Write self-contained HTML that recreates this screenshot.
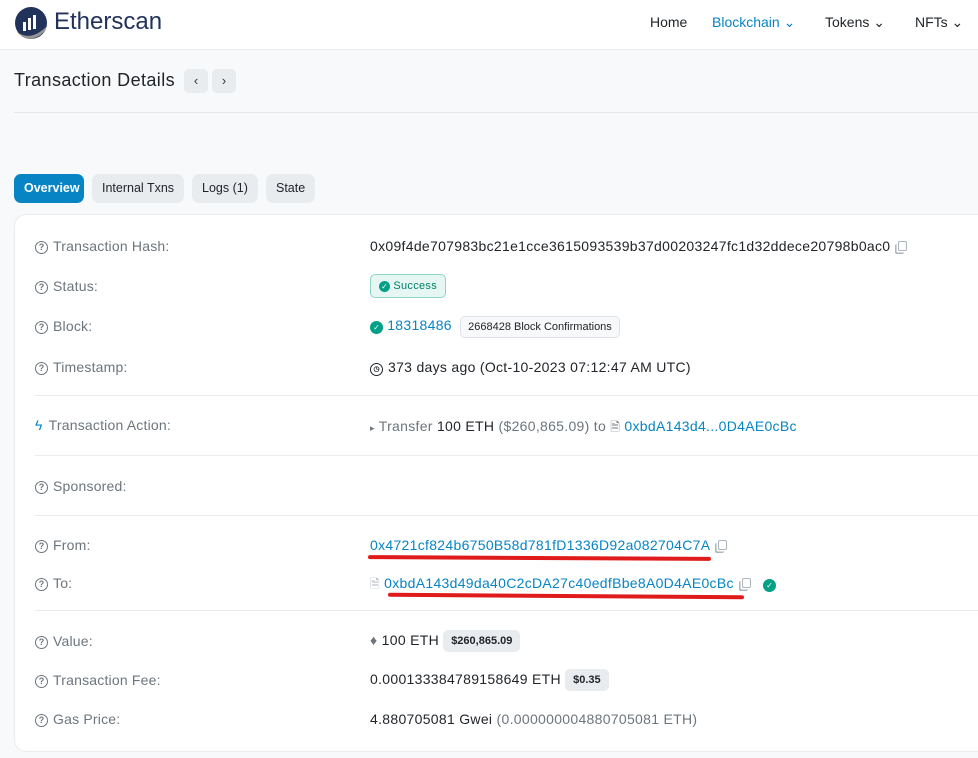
<!DOCTYPE html>
<html><head><meta charset="utf-8"><style>
*{box-sizing:border-box;margin:0;padding:0}
body{width:978px;height:758px;overflow:hidden;background:#f8f9fa;font-family:"Liberation Sans",sans-serif;font-size:14px;color:#212529;position:relative}
.hdr{position:absolute;left:0;top:0;width:978px;height:50px;background:#fff;border-bottom:1px solid #e9ecef}
.a{position:absolute;white-space:nowrap}
.nav{top:14px;font-size:14px;color:#212529}
.btn{position:absolute;top:69px;width:24px;height:24px;background:#e9ecef;border-radius:5px;text-align:center;line-height:24px;font-size:13px;color:#333}
.tab{position:absolute;top:174px;height:29px;line-height:29px;border-radius:7px;background:#e9ecef;font-size:12.5px;padding:0 10px;color:#212529}
.card{position:absolute;left:14px;top:214px;width:980px;height:538px;background:#fff;border:1px solid #e9ecef;border-radius:12px}
.lbl{position:absolute;left:35px;color:#6c757d;font-size:14px;white-space:nowrap;letter-spacing:0.2px}
.q{display:inline-block;width:13px;height:13px;border:1.3px solid #6c757d;border-radius:50%;font-size:9px;line-height:11px;text-align:center;margin-right:5px;vertical-align:1px;font-weight:bold;letter-spacing:0}
.v{position:absolute;left:370px;white-space:nowrap;font-size:14px;letter-spacing:0.3px}
.hr{position:absolute;left:35px;width:943px;height:1px;background:#e9ecef}
.lnk{color:#0784c3}
.badge{display:inline-block;background:#e9ecef;border-radius:5px;font-size:11px;font-weight:bold;padding:4px 6px;vertical-align:1px;letter-spacing:0}
.chk{display:inline-block;width:13px;height:13px;border-radius:50%;background:#00a186;color:#fff;font-size:8px;line-height:13px;text-align:center;vertical-align:0px;letter-spacing:0}
.cp{display:inline-block;width:9px;height:10px;border:1.2px solid #adb5bd;border-radius:2px;margin-left:8px;vertical-align:0px;box-shadow:-2px 2px 0 -0.5px #fff,-3px 3px 0 0 #adb5bd}
.red{position:absolute;height:4px;background:#e01b1b;border-radius:2px}
</style></head><body>
<div class="hdr">
<svg class="a" style="left:14px;top:6px" width="34" height="34" viewBox="0 0 34 34"><circle cx="17" cy="17" r="16" fill="#21325b"/><path d="M3 26 Q17 36 33 20 Q30 30 17 33 Q8 32 3 26Z" fill="#979695"/><rect x="9" y="16" width="3" height="9" fill="#fff"/><rect x="14" y="12" width="3" height="12" fill="#fff"/><rect x="19" y="9" width="3" height="14" fill="#fff"/></svg>
<div class="a" style="left:54px;top:8px;font-size:24px;color:#21325b">Etherscan</div>
<div class="a nav" style="left:650px">Home</div>
<div class="a nav" style="left:712px;color:#0784c3">Blockchain ⌄</div>
<div class="a nav" style="left:825px">Tokens ⌄</div>
<div class="a nav" style="left:915px">NFTs ⌄</div>
</div>
<div class="a" style="left:14px;top:70px;font-size:18px;color:#212529;letter-spacing:0.4px">Transaction Details</div>
<div class="btn" style="left:184px">‹</div>
<div class="btn" style="left:212px">›</div>
<div class="a" style="left:14px;top:112px;width:964px;height:1px;background:#e3e6ea"></div>
<div class="tab" style="left:14px;background:#0784c3;color:#fff;font-weight:bold;width:70px">Overview</div>
<div class="tab" style="left:92px">Internal Txns</div>
<div class="tab" style="left:192px">Logs (1)</div>
<div class="tab" style="left:266px">State</div>
<div class="card"></div>
<div class="lbl" style="top:238px"><span class="q">?</span>Transaction Hash:</div>
<div class="v" style="top:238px">0x09f4de707983bc21e1cce3615093539b37d00203247fc1d32ddece20798b0ac0<span class="cp"></span></div>
<div class="lbl" style="top:278px"><span class="q">?</span>Status:</div>
<div class="v" style="top:274px"><span style="display:inline-block;border:1px solid #8ed5c6;background:#e6f6f3;border-radius:5px;padding:5px 8px;font-size:11px;color:#00806b"><span class="chk" style="width:11px;height:11px;line-height:11px">✓</span> Success</span></div>
<div class="lbl" style="top:318px"><span class="q">?</span>Block:</div>
<div class="v" style="top:316px"><span class="chk">✓</span> <span class="lnk">18318486</span> <span style="display:inline-block;border:1px solid #dee2e6;border-radius:5px;padding:4px 7px;font-size:11px;margin-left:4px;background:#f8f9fa;letter-spacing:0">2668428 Block Confirmations</span></div>
<div class="lbl" style="top:359px"><span class="q">?</span>Timestamp:</div>
<div class="v" style="top:359px"><span class="q" style="border-color:#212529;color:#212529;font-size:7px">◷</span>373 days ago (Oct-10-2023 07:12:47 AM UTC)</div>
<div class="hr" style="top:395px"></div>
<div class="lbl" style="top:417px"><span style="color:#0784c3;margin-right:6px">ϟ</span>Transaction Action:</div>
<div class="v" style="top:418px;color:#6c757d"><span style="font-size:9px">▸</span> Transfer <span style="color:#212529">100 ETH</span> ($260,865.09) to <span style="font-size:12px">🗎</span> <span class="lnk">0xbdA143d4...0D4AE0cBc</span></div>
<div class="hr" style="top:455px"></div>
<div class="lbl" style="top:478px"><span class="q">?</span>Sponsored:</div>
<div class="hr" style="top:515px"></div>
<div class="lbl" style="top:537px"><span class="q">?</span>From:</div>
<div class="v" style="top:537px"><span class="lnk">0x4721cf824b6750B58d781fD1336D92a082704C7A</span><span class="cp"></span></div>
<div class="red" style="left:368px;top:556px;width:343px;transform:rotate(0.3deg)"></div>
<div class="lbl" style="top:575px"><span class="q">?</span>To:</div>
<div class="v" style="top:575px"><span style="color:#adb5bd;font-size:12px">🗎</span> <span class="lnk">0xbdA143d49da40C2cDA27c40edfBbe8A0D4AE0cBc</span><span class="cp"></span> <span class="chk" style="margin-left:8px">✓</span></div>
<div class="red" style="left:388px;top:594px;width:356px;transform:rotate(0.4deg)"></div>
<div class="hr" style="top:610px"></div>
<div class="lbl" style="top:633px"><span class="q">?</span>Value:</div>
<div class="v" style="top:630px"><span style="color:#6c757d">♦</span> 100 ETH <span class="badge" style="padding:5px 8px">$260,865.09</span></div>
<div class="lbl" style="top:672px"><span class="q">?</span>Transaction Fee:</div>
<div class="v" style="top:669px">0.000133384789158649 ETH <span class="badge" style="padding:5px 8px">$0.35</span></div>
<div class="lbl" style="top:711px"><span class="q">?</span>Gas Price:</div>
<div class="v" style="top:711px">4.880705081 Gwei <span style="color:#6c757d">(0.000000004880705081 ETH)</span></div>
</body></html>
